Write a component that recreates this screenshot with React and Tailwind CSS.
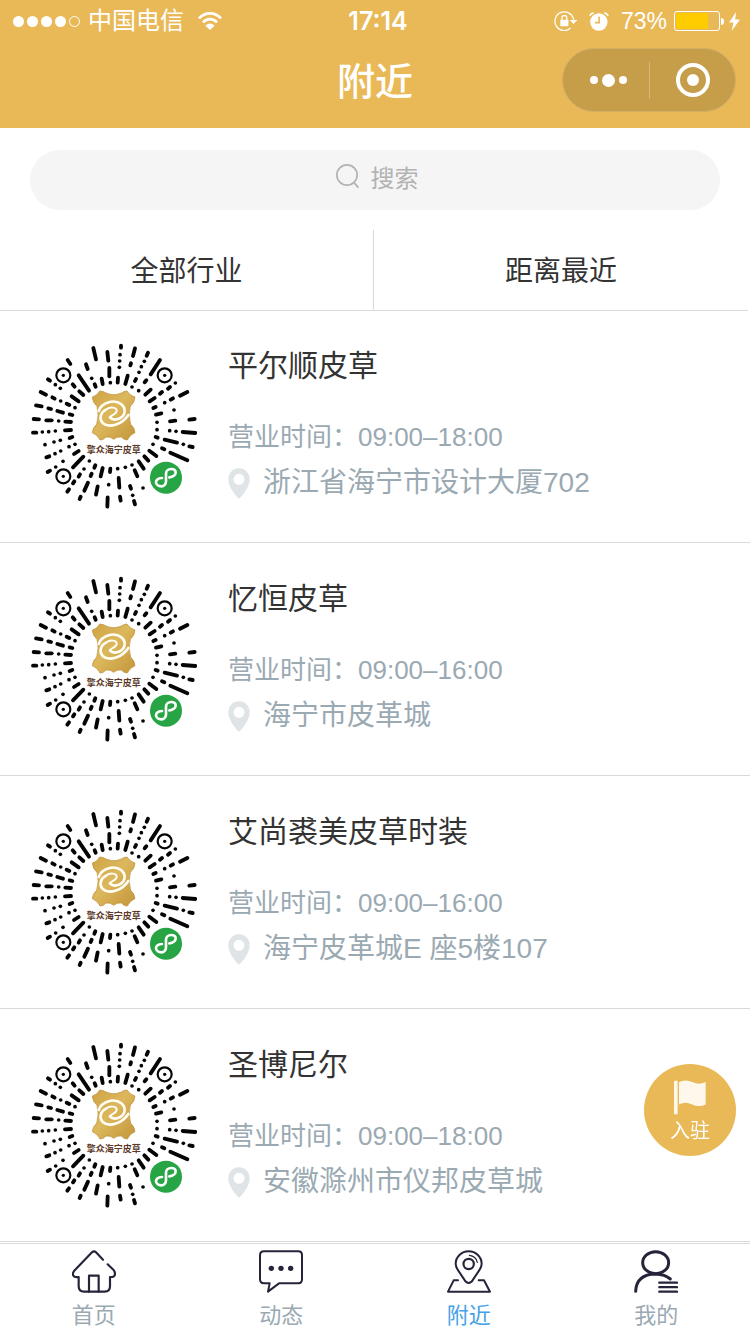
import React from "react";

const shops = [
  { name: "平尔顺皮草", hours: "09:00–18:00", address: "浙江省海宁市设计大厦702" },
  { name: "忆恒皮草", hours: "09:00–16:00", address: "海宁市皮革城" },
  { name: "艾尚裘美皮草时装", hours: "09:00–16:00", address: "海宁皮革城E 座5楼107" },
  { name: "圣博尼尔", hours: "09:00–18:00", address: "安徽滁州市仪邦皮草城" },
];

// Dashes of the mini-program code, one list per quadrant: [x1, y1, x2, y2] or [x, y] for a dot.
const quadrants = [
  {
    x: 24,
    y: 15,
    marks: [
      [119, 60, 127, 72], [196, 24, 204, 58], [238, 36, 241, 62], [174, 73, 179, 87], [244, 84, 244, 109],
      [191, 115], [221, 116, 224, 132], [247, 128], [200, 133, 203, 140], [152, 106, 183, 152],
      [154, 154, 166, 165], [134, 133, 140, 140], [60, 118, 66, 122], [82, 134], [97, 145],
      [38, 156, 54, 164], [73, 172, 80, 176], [98, 183], [116, 191, 124, 195], [131, 169, 152, 184],
      [141, 203], [24, 196, 41, 199], [61, 205, 69, 207], [88, 213, 105, 218], [125, 223, 133, 225],
      [17, 237, 33, 238], [55, 241, 71, 241], [92, 243], [112, 245, 129, 246],
    ],
  },
  {
    x: 282,
    y: 15,
    marks: [
      [21, 17, 21, 23], [18, 44], [17, 63], [16, 82], [12, 113, 11, 128], [63, 25, 57, 48],
      [51, 70, 49, 76], [41, 107, 34, 132], [102, 38, 98, 47], [91, 64], [82, 80], [75, 97],
      [66, 117, 63, 123], [138, 60, 110, 103], [97, 121, 92, 127], [54, 141], [74, 152],
      [110, 149, 94, 164], [184, 129], [168, 141, 162, 146], [144, 156, 138, 161], [122, 174, 107, 184],
      [220, 156, 198, 167], [177, 175, 170, 179], [152, 188], [125, 201, 118, 204], [180, 210],
      [142, 220, 126, 224], [129, 247], [184, 242, 168, 244], [242, 237, 226, 239],
    ],
  },
  {
    x: 24,
    y: 273,
    marks: [
      [15, 20, 25, 20], [43, 18], [62, 17], [82, 15], [111, 13, 129, 12], [51, 56], [78, 48], [97, 43],
      [125, 36, 133, 33], [55, 94, 64, 91], [81, 83], [98, 75], [123, 62], [141, 55], [138, 84, 152, 75],
      [105, 106], [166, 92, 135, 124], [59, 138, 66, 134], [83, 123], [184, 105], [168, 129],
      [202, 118, 199, 125], [191, 143, 188, 150], [156, 145, 152, 152], [139, 166, 135, 172],
      [123, 190, 118, 197], [180, 170, 169, 194], [158, 212, 155, 219], [224, 126, 218, 151],
      [209, 181, 204, 206], [247, 128, 246, 138], [242, 176], [239, 214, 238, 242],
    ],
  },
  {
    x: 282,
    y: 273,
    marks: [
      [129, 11], [167, 14], [186, 16], [206, 18, 244, 21], [125, 33, 131, 35], [152, 41, 189, 50],
      [208, 55], [226, 61, 236, 63], [117, 55], [144, 67, 151, 70], [169, 80, 220, 103],
      [106, 74, 127, 90], [91, 91, 103, 104], [74, 106, 89, 128], [54, 117], [34, 124], [11, 128],
      [62, 133, 70, 151], [14, 156, 16, 185], [48, 180, 51, 188], [87, 186], [56, 208],
      [18, 212, 20, 224], [60, 225, 63, 235],
    ],
  },
];

function MiniCode() {
  return (
    <svg viewBox="33 21 498 504" className="w-[166px] h-[168px] shrink-0" role="img" aria-label="擎众海宁皮草">
      {quadrants.map((q, i) => (
        <g key={i} transform={`translate(${q.x} ${q.y})`} stroke="#050505" strokeLinecap="round" fill="none">
          {q.marks.map((m, j) => (
            <path
              key={j}
              d={m.length === 2 ? `M${m[0]} ${m[1]}h0.1` : `M${m[0]} ${m[1]}L${m[2]} ${m[3]}`}
              strokeWidth={m.length === 2 ? 11 : 11.5}
            />
          ))}
        </g>
      ))}
      {[[130, 121], [434, 121], [130, 424]].map(([x, y]) => (
        <g key={`${x}-${y}`}>
          <circle cx={x} cy={y} r="21" fill="none" stroke="#050505" strokeWidth="6.5" />
          <circle cx={x} cy={y} r="5" fill="#050505" />
        </g>
      ))}
      <linearGradient id="hide" x1="0" y1="0" x2="1" y2="1">
        <stop offset="0" stopColor="#cfa343" />
        <stop offset="0.45" stopColor="#dcb75c" />
        <stop offset="1" stopColor="#c4963a" />
      </linearGradient>
      <path
        d="M217 186Q232 182 239 168Q250 168 258 174Q281 184 304 174Q312 168 321 168Q330 182 345 186Q344 203 331 214Q324 240 332 268Q344 278 345 293Q330 299 322 315Q312 316 304 306Q290 304 281 313Q272 304 258 306Q250 316 240 315Q232 299 217 293Q218 278 230 268Q238 240 231 214Q218 203 217 186Z"
        fill="url(#hide)"
        stroke="#b98c38"
        strokeWidth="2"
      />
      <g fill="none" stroke="#fffdf4" strokeLinecap="round">
        <path d="M236 228C246 200 284 192 304 208C322 224 314 246 294 252C284 255 274 252 270 248" strokeWidth="8" />
        <path d="M258 224C270 214 292 216 290 229C288 238 276 238 270 246" strokeWidth="6" />
        <path d="M258 224C242 232 236 250 248 264C266 280 306 270 325 240" strokeWidth="8" />
      </g>
      <text
        x="281"
        y="353"
        textAnchor="middle"
        fontSize="27"
        fontWeight="700"
        fill="#5c3a2a"
        fontFamily="'Noto Sans CJK SC', sans-serif"
      >
        擎众海宁皮草
      </text>
      <circle cx="438" cy="428" r="48" fill="#27a443" />
      <path
        d="M448 427C460 426 467 419 467 412C467 406 461 402 454 402C445 402 438 408 438 416V439C438 447 432 454 424 454C416 454 408 449 408 442C408 434 415 430 426 429"
        fill="none"
        stroke="#fff"
        strokeWidth="8"
        strokeLinecap="round"
      />
    </svg>
  );
}

function StatusBar() {
  return (
    <div className="grid grid-cols-[1fr_auto_1fr] items-center h-10 pt-0.5">
      <div className="flex items-center pl-[13px]">
        <div className="flex gap-[3px]">
          {[1, 1, 1, 1, 0].map((on, i) => (
            <span key={i} className={on ? "size-[11px] rounded-full bg-white" : "size-[11px] rounded-full border border-white"} />
          ))}
        </div>
        <span className="ml-2 text-2xl leading-9">中国电信</span>
        <svg viewBox="0 0 72 54" className="ml-[14px] w-6 h-[18px]" aria-hidden="true">
          <g fill="none" stroke="#fff" strokeWidth="8">
            <path d="M3 19C22 -1 50 -1 69 19" />
            <path d="M15 31C27 18 45 18 57 31" />
          </g>
          <path d="M36 54L22 41Q36 28 50 41Z" fill="#fff" />
        </svg>
      </div>
      <span className="pl-1.5 font-['Inter',sans-serif] text-[25px] leading-9 font-semibold">17:14</span>
      <div className="flex items-center justify-end pr-[10px]">
        <svg viewBox="533 29 70 62" className="w-[23px] h-5" aria-hidden="true">
          <path d="M593 56A29 29 0 1 0 584 82" fill="none" stroke="#fff" strokeWidth="4" />
          <path d="M581 57H604L593 69Z" fill="#fff" />
          <rect x="552" y="56" width="25" height="20" rx="2" fill="#fff" />
          <path d="M557 57V50Q557 43 564.500 43Q572 43 572 50V57" fill="none" stroke="#fff" strokeWidth="4" />
        </svg>
        <svg viewBox="641 31 59 57" className="ml-3 w-5 h-[19px]" aria-hidden="true">
          <circle cx="670" cy="61" r="26" fill="#fff" />
          <path d="M671 45V63H658" fill="none" stroke="#eab957" strokeWidth="5" />
          <path d="M643 43Q646 34 655 34M686 34Q695 34 698 43" fill="none" stroke="#fff" strokeWidth="4" />
        </svg>
        <span className="ml-3 font-['Liberation_Sans',sans-serif] text-[23px] leading-9">73%</span>
        <span className="ml-[7px] flex w-[46px] h-5 rounded-[3px] border border-white p-px">
          <span className="w-3/4 rounded-l-[2px] bg-[#ffcc00]" />
        </span>
        <span className="ml-px w-[3px] h-[7px] rounded-r-full bg-white" />
        <svg viewBox="0 0 34 58" className="ml-[5px] w-[11px] h-[19px]" aria-hidden="true">
          <path d="M22 0L0 32H14L8 58L34 23H19Z" fill="#fff" />
        </svg>
      </div>
    </div>
  );
}

function Header() {
  return (
    <header className="bg-[#eab957] pb-2 text-white">
      <StatusBar />
      <div className="grid grid-cols-[1fr_auto_1fr] items-center h-20">
        <h1 className="col-start-2 pt-1 text-[38px] leading-[72px] font-medium">附近</h1>
        <div className="flex items-center justify-self-end mr-[14px] w-[174px] h-16 rounded-full border border-[#d1ae6a] bg-[#c69e4a]">
          <button type="button" aria-label="更多" className="flex w-[86px] shrink-0 items-center justify-center gap-1 pl-1">
            <span className="size-2 rounded-full bg-white" />
            <span className="size-[13px] rounded-full bg-white" />
            <span className="size-2 rounded-full bg-white" />
          </button>
          <span className="w-px h-[37px] bg-[#d7b878]" />
          <button type="button" aria-label="关闭" className="flex flex-1 items-center justify-center">
            <span className="flex items-center justify-center size-[34px] rounded-full border-4 border-white">
              <span className="size-3 rounded-full bg-white" />
            </span>
          </button>
        </div>
      </div>
    </header>
  );
}

function Shop({ shop }) {
  return (
    <li className="flex items-start gap-[31px] h-[233px] border-b border-[#d9d9d9] pl-[31px] pt-8">
      <MiniCode />
      <div className="min-w-0 flex-1">
        <h2 className="text-[30px] leading-[48px] text-[#333333]">{shop.name}</h2>
        <p className="mt-6 text-[26px] leading-[46px]">营业时间：{shop.hours}</p>
        <p className="flex items-center gap-[13px] text-[28px] leading-[46px]">
          <svg viewBox="0 0 66 92" className="w-[22px] h-[31px] shrink-0" aria-hidden="true">
            <path
              fillRule="evenodd"
              fill="#dfe4e7"
              d="M33 0C51 0 65 14 65 33C65 56 45 80 33 92C21 80 1 56 1 33C1 14 15 0 33 0ZM33 17A16.500 16.500 0 1 0 33 50A16.500 16.500 0 1 0 33 17Z"
            />
          </svg>
          {shop.address}
        </p>
      </div>
    </li>
  );
}

const tabs = [
  {
    label: "首页",
    box: "216 43 132 129",
    art: (
      <g strokeWidth="6.5">
        <path d="M309 72L288 50Q282 44 276 50L222 106Q215 117 222 122Q226 125 236 124V152Q236 168 252 168H314Q330 168 330 152V124Q345 125 345 114Q345 108 340 102L323 86" />
        <path d="M267 168V120H296V168" />
      </g>
    ),
  },
  {
    label: "动态",
    box: "777 43 132 129",
    art: (
      <g strokeWidth="6">
        <path d="M792 47H895Q906 47 906 59V131Q906 143 895 143H837L804 168L809 143H792Q780 143 780 131V59Q780 47 792 47Z" />
        <g fill="#26233a" stroke="none">
          <circle cx="814" cy="98" r="8" />
          <circle cx="843" cy="98" r="8" />
          <circle cx="872" cy="98" r="8" />
        </g>
      </g>
    ),
  },
  {
    label: "附近",
    box: "216 43 132 129",
    active: true,
    art: (
      <g strokeWidth="6">
        <path d="M281 142Q274 142 268 132L248 102Q242 92 242 84A39 37 0 0 1 320 84Q320 92 314 102L294 132Q288 142 281 142Z" />
        <circle cx="281" cy="85" r="15.500" strokeWidth="6.5" />
        <path d="M283 59Q303 61 307 80" strokeWidth="3.5" />
        <path d="M249 134H236L219 168H345L327 134H311" />
      </g>
    ),
  },
  {
    label: "我的",
    box: "777 43 132 129",
    art: (
      <g strokeWidth="9">
        <ellipse cx="842" cy="81" rx="39" ry="33" />
        <path d="M782 167Q784 116 842 115Q870 116 886 130" />
        <path d="M853 141H906M853 154.500H906M853 168H906" strokeWidth="7" />
      </g>
    ),
  },
];

export default function App() {
  return (
    <div className="flex flex-col min-h-screen bg-white text-[#9aa9b2] font-['Liberation_Sans','Noto_Sans_CJK_SC',sans-serif]">
      <Header />
      <main className="flex-1">
        <div className="px-[30px] pt-[22px] pb-5">
          <label className="flex items-center justify-center gap-3 h-[60px] rounded-full bg-[#f5f5f5] pb-2 pl-1">
            <svg viewBox="107 71 69 75" className="w-[23px] h-[25px]" fill="none" stroke="#b2b2b2" strokeWidth="5" aria-hidden="true">
              <circle cx="140" cy="104" r="30.500" />
              <path d="M161 127L174 142" />
            </svg>
            <input
              type="text"
              placeholder="搜索"
              aria-label="搜索"
              className="field-sizing-content h-9 text-2xl text-[#333333] placeholder:text-[#b2b2b2] outline-none"
            />
          </label>
        </div>
        <div className="mr-0.5 -mb-px grid grid-cols-2 border-b border-[#d9d9d9] text-[28px] leading-[76px] text-[#333333]">
          <button type="button" className="border-r border-[#d9d9d9] pt-1">全部行业</button>
          <button type="button" className="pt-1">距离最近</button>
        </div>
        <ul>
          {shops.map((s) => (
            <Shop key={s.name} shop={s} />
          ))}
        </ul>
      </main>

      <nav className="sticky bottom-0 mt-px grid grid-cols-4 border-t border-[#d9d9d9] bg-white">
        {tabs.map((t) => (
          <a
            key={t.label}
            href="#"
            aria-current={t.active ? "page" : undefined}
            className={t.active ? "flex flex-col items-center gap-2 pt-1.5 pb-[3px] text-[#46a3e6]" : "flex flex-col items-center gap-2 pt-1.5 pb-[3px]"}
          >
            <svg
              viewBox={t.box}
              className="w-11 h-[43px]"
              fill="none"
              stroke="#26233a"
              strokeLinecap="round"
              strokeLinejoin="round"
              aria-hidden="true"
            >
              {t.art}
            </svg>
            <span className="text-[22px] leading-[30px]">{t.label}</span>
          </a>
        ))}
      </nav>

      <button
        type="button"
        className="fixed right-3.5 bottom-[178px] flex flex-col items-center size-[92px] rounded-full bg-[#eab957] pt-4 text-white"
      >
        <svg viewBox="132 89 97 104" className="w-8 h-[35px]" fill="#fef8ec" aria-hidden="true">
          <rect x="132" y="90" width="11" height="102" rx="2" />
          <path d="M147 95Q166 84 187 94Q208 104 228 94V162Q208 172 187 162Q166 152 147 162Z" />
        </svg>
        <span className="text-xl leading-8">入驻</span>
      </button>
    </div>
  );
}
